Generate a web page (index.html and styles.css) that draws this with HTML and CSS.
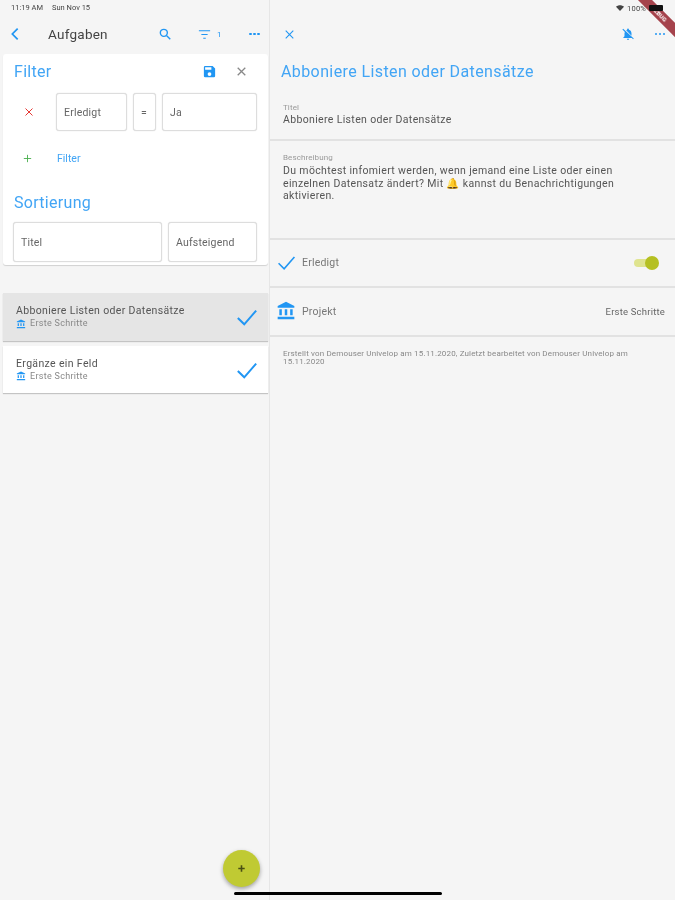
FILE: index.html
```html
<!DOCTYPE html>
<html lang="de">
<head>
    <meta charset="UTF-8">
    <meta name="viewport" content="width=device-width, initial-scale=1.0">
    <title>Aufgaben</title>
    <link rel="stylesheet" href="styles.css">
</head>
<body>

    <div class="app">
        <div class="master">
            <div class="status-left"><span>11:19 AM</span><span>Sun Nov 15</span></div>

            <div class="appbar">
                <svg class="icon back" viewBox="0 0 24 24"><path d="M16 4l-8 8 8 8" /></svg>
                <div class="appbar-title">Aufgaben</div>
                <svg class="icon search" viewBox="0 0 24 24"><circle cx="10" cy="10" r="6" /><path d="M14.5 14.5L21 21" /></svg>
                <div class="filter-count">
                    <svg class="icon" viewBox="0 0 24 24"><path d="M3 6h18M7 12h10M10 18h4" /></svg>
                    <span>1</span>
                </div>
                <div class="dots"><i></i><i></i><i></i></div>
            </div>

            <div class="filter-card">
                <div class="card-head">
                    <div class="card-title">Filter</div>
                    <svg class="save" viewBox="0 0 24 24"><path d="M17 3H5a2 2 0 0 0-2 2v14a2 2 0 0 0 2 2h14a2 2 0 0 0 2-2V7l-4-4zm-5 16a3 3 0 1 1 0-6 3 3 0 0 1 0 6zm3-10H5V5h10v4z" /></svg>
                    <svg class="icon close-grey" viewBox="0 0 24 24"><path d="M5 5l14 14M19 5L5 19" /></svg>
                </div>

                <div class="filter-row">
                    <svg class="icon remove" viewBox="0 0 24 24"><path d="M5 5l14 14M19 5L5 19" /></svg>
                    <div class="field field-name">Erledigt</div>
                    <div class="field field-op">=</div>
                    <div class="field field-value">Ja</div>
                </div>

                <div class="add-row">
                    <svg class="icon add" viewBox="0 0 24 24"><path d="M12 4v16M4 12h16" /></svg>
                    <span>Filter</span>
                </div>

                <div class="card-title sort-title">Sortierung</div>
                <div class="sort-row">
                    <div class="field sort-name">Titel</div>
                    <div class="field sort-dir">Aufsteigend</div>
                </div>
            </div>

            <div class="task-list">
                <div class="task selected">
                    <div class="task-text">
                        <div class="task-name">Abboniere Listen oder Datensätze</div>
                        <div class="task-project">
                            <svg class="bank" viewBox="0 0 24 24"><path d="M12 1L2 6v2h20V6L12 1zM4 10v7h3v-7H4zm6.5 0v7h3v-7h-3zM17 10v7h3v-7h-3zM2 19v3h20v-3H2z" /></svg>
                            Erste Schritte
                        </div>
                    </div>
                    <svg class="icon check" viewBox="0 0 24 24"><path d="M2 13l7 7L22 5" /></svg>
                </div>
                <div class="task">
                    <div class="task-text">
                        <div class="task-name">Ergänze ein Feld</div>
                        <div class="task-project">
                            <svg class="bank" viewBox="0 0 24 24"><path d="M12 1L2 6v2h20V6L12 1zM4 10v7h3v-7H4zm6.5 0v7h3v-7h-3zM17 10v7h3v-7h-3zM2 19v3h20v-3H2z" /></svg>
                            Erste Schritte
                        </div>
                    </div>
                    <svg class="icon check" viewBox="0 0 24 24"><path d="M2 13l7 7L22 5" /></svg>
                </div>
            </div>

            <div class="fab"><svg viewBox="0 0 24 24"><path d="M12 5v14M5 12h14" /></svg></div>
        </div>

        <div class="detail">
            <div class="status-right">
                <svg class="wifi" viewBox="0 0 24 24"><path d="M12 21L0 8c7-6 17-6 24 0z" /></svg>
                <span>100%</span>
                <div class="battery"></div>
            </div>

            <div class="appbar detail-bar">
                <svg class="icon close-blue" viewBox="0 0 24 24"><path d="M5 5l14 14M19 5L5 19" /></svg>
                <svg class="bell" viewBox="0 0 24 24"><path d="M12 22a2 2 0 0 0 2-2h-4a2 2 0 0 0 2 2zM18 11c0-3-1.6-5.600-4.500-6.300V4a1.500 1.500 0 0 0-3 0v.7c-.6.1-1.100.4-1.600.7L18 15v-4zM3.700 3L2.400 4.300l4.300 4.300C6.200 9.500 6 10.200 6 11v5l-2 2v1h14.700l1.900 1.900 1.300-1.300L3.700 3z" /></svg>
                <div class="dots"><i></i><i></i><i></i></div>
            </div>

            <div class="detail-title">Abboniere Listen oder Datensätze</div>

            <div class="section title-section">
                <div class="label">Titel</div>
                <div class="value">Abboniere Listen oder Datensätze</div>
            </div>

            <div class="section desc-section">
                <div class="label">Beschreibung</div>
                <div class="value desc">Du möchtest infomiert werden, wenn jemand eine Liste oder einen einzelnen Datensatz ändert? Mit 🔔 kannst du Benachrichtigungen aktivieren.</div>
            </div>

            <div class="row">
                <svg class="icon row-check" viewBox="0 0 24 24"><path d="M2 13l7 7L22 5" /></svg>
                <div class="row-label">Erledigt</div>
                <div class="switch"><div class="switch-knob"></div></div>
            </div>

            <div class="row row-project">
                <svg class="row-bank" viewBox="0 0 24 24"><path d="M12 1L2 6v2h20V6L12 1zM4 10v7h3v-7H4zm6.5 0v7h3v-7h-3zM17 10v7h3v-7h-3zM2 19v3h20v-3H2z" /></svg>
                <div class="row-label">Projekt</div>
                <div class="row-value">Erste Schritte</div>
            </div>

            <div class="footnote">Erstellt von Demouser Univelop am 15.11.2020, Zuletzt bearbeitet von Demouser Univelop am 15.11.2020</div>
        </div>

        <div class="ribbon">DEBUG</div>
    </div>

    <div class="home-bar"></div>

</body>
</html>
```

FILE: styles.css
```css
* { box-sizing: border-box; margin: 0; padding: 0; font-family: Roboto, "Liberation Sans", sans-serif; }
body { background-color: #f5f5f5; color: #444; width: 675px; height: 900px; overflow: hidden; position: relative; }
svg { display: block; flex: none; }
.app { display: flex; height: 900px; filter: blur(0.4px); }
.master { width: 270px; border-right: 1px solid #e6e6e6; position: relative; flex: none; }
.detail { flex: 1; min-width: 0; }

.status-left { height: 16px; display: flex; gap: 9px; padding: 4px 0 0 11px; font-size: 7.5px; line-height: 8px; color: #444; }
.status-right { height: 16px; display: flex; align-items: center; justify-content: flex-end; gap: 3px; padding-right: 12px; font-size: 7.5px; letter-spacing: 0.2px; color: #444; position: relative; z-index: 2; }
.wifi { width: 8px; height: 8px; fill: #444; }
.battery { width: 14px; height: 6px; background: #111; border-radius: 1px; }

.appbar { height: 36px; display: flex; align-items: center; position: relative; }
.icon { fill: none; stroke: #2196f3; stroke-width: 2; }
.back { width: 16px; height: 16px; margin-left: 7px; stroke-width: 2.6; }
.appbar-title { font-size: 13.5px; color: #444; margin-left: 25px; width: 110px; letter-spacing: 0.25px; }
.search { width: 14px; height: 14px; margin-right: 25px; stroke-width: 2.4; }
.filter-count { display: flex; align-items: center; gap: 5px; font-size: 8px; color: #2196f3; width: 52px; }
.filter-count .icon { width: 15px; height: 15px; stroke-width: 1.8; }
.dots { display: flex; gap: 1.5px; }
.dots i { width: 2.5px; height: 2.5px; border-radius: 50%; background: #2196f3; }

.filter-card { margin: 2px 1px 0 3px; height: 211px; background: #fff; border-radius: 3px; box-shadow: 0 1px 1px rgba(0, 0, 0, 0.15); padding: 0 11px 0 10px; }
.card-head { height: 36px; display: flex; align-items: center; padding-bottom: 1px; }
.card-title { font-size: 16px; color: #42a5f5; letter-spacing: 0.3px; padding-left: 1px; }
.card-head .card-title { flex: 1; }
.save { width: 15px; height: 15px; fill: #2196f3; margin-right: 18px; }
.close-grey { width: 13px; height: 13px; stroke: #888; margin-right: 9px; stroke-width: 2.4; }

.field { background: #fff; border: 1px solid #ddd; border-radius: 3px; box-shadow: 0 0 1px rgba(0, 0, 0, 0.2); font-size: 10.5px; color: #666; display: flex; align-items: center; padding-left: 7px; letter-spacing: 0.2px; }
.filter-row { display: flex; align-items: center; gap: 6px; margin-top: 3px; height: 38px; }
.remove { width: 12px; height: 12px; stroke: #e53935; margin-left: 10px; margin-right: 15px; }
.field-name { width: 71px; height: 38px; }
.field-op { width: 23px; height: 38px; }
.field-value { flex: 1; height: 38px; }

.add-row { display: flex; align-items: center; margin-top: 17px; height: 20px; font-size: 10.5px; color: #42a5f5; }
.add { width: 11px; height: 11px; stroke: #4caf50; margin-left: 9px; margin-right: 24px; }
.sort-title { margin-top: 25px; line-height: 20px; }
.sort-row { display: flex; gap: 6px; margin-top: 9px; }
.sort-name { flex: 1; height: 40px; }
.sort-dir { width: 89px; height: 40px; }

.task-list { margin: 28px 1px 0 3px; display: flex; flex-direction: column; gap: 5px; }
.task { height: 48px; background: #fff; box-shadow: 0 1px 1px rgba(0, 0, 0, 0.2); display: flex; align-items: center; padding: 0 10px 0 13px; }
.task + .task { height: 47px; }
.task.selected { background: #e5e5e5; }
.task-text { flex: 1; min-width: 0; padding-bottom: 1px; }
.task-name { font-size: 10.5px; line-height: 13px; color: #555; letter-spacing: 0.35px; }
.task-project { display: flex; align-items: center; gap: 4px; font-size: 9px; line-height: 11px; color: #888; margin-top: 1px; letter-spacing: 0.3px; }
.bank { width: 10px; height: 10px; fill: #2196f3; }
.check { width: 22px; height: 22px; stroke-width: 2.2; }

.fab { position: absolute; left: 223px; top: 850px; width: 37px; height: 37px; border-radius: 50%; background: #c0ca33; box-shadow: 0 2px 4px rgba(0, 0, 0, 0.35); display: flex; align-items: center; justify-content: center; }
.fab svg { width: 11px; height: 11px; fill: none; stroke: #4a4f14; stroke-width: 3.5; }

.detail-bar { justify-content: flex-end; padding-right: 10px; }
.close-blue { width: 13px; height: 13px; position: absolute; left: 13px; top: 12px; }
.bell { width: 14px; height: 14px; fill: #2196f3; margin-right: 20px; }

.detail-title { font-size: 16px; line-height: 20px; color: #42a5f5; padding-left: 11px; margin-top: 10px; letter-spacing: 0.4px; }

.section { padding: 0 14px 0 13px; border-bottom: 2px solid #e2e2e2; }
.title-section { height: 59px; padding-top: 21px; }
.desc-section { height: 99px; padding-top: 12px; }
.label { font-size: 8px; line-height: 9px; color: #999; letter-spacing: 0.1px; }
.value { font-size: 10.5px; line-height: 12.5px; color: #555; letter-spacing: 0.35px; margin-top: 2px; }
.desc { width: 335px; margin-top: 3px; }

.row { height: 48px; display: flex; align-items: center; border-bottom: 2px solid #e2e2e2; padding: 0 10px 1px 7px; }
.row-project { height: 49px; }
.row-check { width: 19px; height: 19px; }
.row-bank { width: 20px; height: 20px; fill: #2196f3; margin-left: -1px; }
.row-label { flex: 1; font-size: 10.5px; color: #777; margin-left: 6px; letter-spacing: 0.2px; }
.row-value { font-size: 9.5px; color: #666; letter-spacing: 0.2px; }
.switch { width: 24px; height: 8px; border-radius: 4px; background: #dfe48f; position: relative; margin-right: 7px; }
.switch-knob { position: absolute; right: -1px; top: -3px; width: 14px; height: 14px; border-radius: 50%; background: #b5c022; }

.footnote { padding: 13px 30px 0 13px; font-size: 8px; line-height: 8px; color: #888; letter-spacing: 0.15px; }

.ribbon { position: absolute; right: -16px; top: 9px; z-index: 1; width: 64px; height: 10px; background: #a5434c; color: #fff; font-size: 6px; font-weight: bold; line-height: 10px; text-align: center; transform: rotate(45deg); }
.home-bar { position: absolute; left: 234px; top: 892px; width: 208px; height: 3px; background: #000; border-radius: 2px; }
```
